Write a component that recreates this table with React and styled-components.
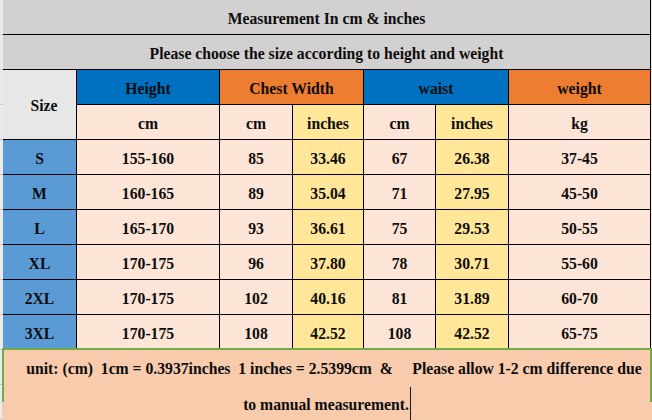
import React from "react";
import styled, { createGlobalStyle, css } from "styled-components";

const Global = createGlobalStyle`
  html, body { margin: 0; padding: 0; background: #ffffff; }
  body { overflow: hidden; }
`;

const TONES = {
  title: "#d2d0d0",
  corner: "#e8e7e7",
  blue: "#0070c0",
  orange: "#ed7d31",
  peach: "#fce4d6",
  yellow: "#ffe699",
  size: "#5b9bd5",
};

const Page = styled.div`
  width: 652px;
  height: 420px;
  overflow: hidden;
  display: flex;
  flex-direction: column;
  background: repeating-linear-gradient(
    to bottom,
    #eaeaea 0,
    #eaeaea 34px,
    #c9c9c9 34px,
    #c9c9c9 35px
  );
  font-family: "Liberation Serif", "Times New Roman", serif;
  font-weight: bold;
  font-size: 15.7px;
  color: #0d0d0d;
`;

const Sheet = styled.div`
  margin-left: 3px;
  width: 647px;
  display: grid;
  grid-template-columns: 73px 142px 72px 70px 71px 72px 141px;
  grid-auto-rows: 34px;
  gap: 1px;
  background: #000;
  border-right: 1px solid #000;
`;

const Cell = styled.div`
  display: flex;
  align-items: center;
  justify-content: center;
  padding-top: 3px;
  padding-left: ${(p) => p.$shift || 0}px;
  box-sizing: border-box;
  white-space: nowrap;
  background: ${(p) => TONES[p.$tone] || TONES.peach};
  ${(p) =>
    p.$span &&
    css`
      grid-column: span ${p.$span};
    `}
  ${(p) =>
    p.$rows &&
    css`
      grid-row: span ${p.$rows};
    `}
`;

const Footer = styled.div`
  margin-top: -1px;
  margin-left: 2px;
  width: 650px;
  flex: 1;
  box-sizing: border-box;
  border-top: 2px solid #70ad47;
  background:
    linear-gradient(#70ad47, #70ad47) left top / 2px 52px no-repeat,
    linear-gradient(#70ad47, #70ad47) right top / 2px 52px no-repeat,
    #f8cbad;
  padding-top: 1px;
  text-align: center;
  line-height: 36px;
`;

const Line = styled.div`
  white-space: pre;
  padding-left: ${(p) => p.$indent || 0}px;
`;

const Cursor = styled.span`
  display: inline-block;
  width: 0;
  height: 36px;
  border-left: 1px solid #1a1a1a;
  vertical-align: top;
  margin-left: 1px;
`;

const rows = [
  ["S", "155-160", "85", "33.46", "67", "26.38", "37-45"],
  ["M", "160-165", "89", "35.04", "71", "27.95", "45-50"],
  ["L", "165-170", "93", "36.61", "75", "29.53", "50-55"],
  ["XL", "170-175", "96", "37.80", "78", "30.71", "55-60"],
  ["2XL", "170-175", "102", "40.16", "81", "31.89", "60-70"],
  ["3XL", "170-175", "108", "42.52", "108", "42.52", "65-75"],
];

const bodyTones = ["size", "peach", "peach", "yellow", "peach", "yellow", "peach"];

export default function App() {
  return (
    <Page>
      <Global />
      <Sheet>
        <Cell $tone="title" $span={7}>Measurement In cm &amp; inches</Cell>
        <Cell $tone="title" $span={7}>
          Please choose the size according to height and weight
        </Cell>
        <Cell $tone="corner" $rows={2} $shift={9}>Size</Cell>
        <Cell $tone="blue">Height</Cell>
        <Cell $tone="orange" $span={2}>Chest Width</Cell>
        <Cell $tone="blue" $span={2}>waist</Cell>
        <Cell $tone="orange">weight</Cell>
        <Cell $tone="peach">cm</Cell>
        <Cell $tone="peach">cm</Cell>
        <Cell $tone="yellow">inches</Cell>
        <Cell $tone="peach">cm</Cell>
        <Cell $tone="yellow">inches</Cell>
        <Cell $tone="peach">kg</Cell>
        {rows.map((r) =>
          r.map((v, i) => (
            <Cell key={r[0] + i} $tone={bodyTones[i]}>
              {v}
            </Cell>
          ))
        )}
      </Sheet>
      <Footer>
        <Line $indent={14}>
          {"unit: (cm)  1cm = 0.3937inches  1 inches = 2.5399cm  &     Please allow 1-2 cm difference due"}
        </Line>
        <Line>
          to manual measurement.
          <Cursor />
        </Line>
      </Footer>
    </Page>
  );
}
